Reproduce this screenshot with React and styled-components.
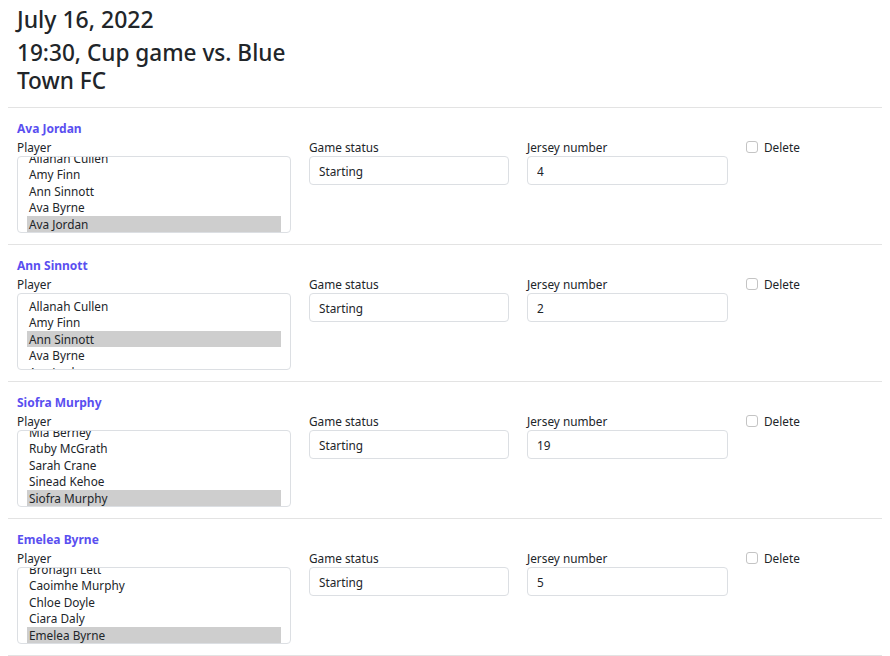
import React from "react";
import styled, { createGlobalStyle } from "styled-components";

const Global = createGlobalStyle`
  html, body { margin: 0; padding: 0; background: #fff; }
  body {
    margin: 0 8px;
    font-family: "Noto Sans", "Open Sans", sans-serif;
    color: #212529;
  }
  * { box-sizing: border-box; }
`;

const Page = styled.div`
  display: flex;
  flex-direction: column;
`;

const Header = styled.header`
  padding: 5px 9px 12px;
  display: flex;
  flex-direction: column;
  gap: 6px;
`;

const DateTitle = styled.h1`
  margin: 0;
  font-size: 23px;
  line-height: 28px;
  font-weight: 500;
`;

const GameTitle = styled.h2`
  margin: 0;
  font-size: 22.6px;
  line-height: 28px;
  font-weight: 500;
  max-width: 290px;
`;

const Section = styled.section`
  border-top: 1px solid #e3e3e3;
  padding: 13px 9px 11px;
  display: flex;
  flex-direction: column;
  gap: 2px;
`;

const LastRule = styled.div`
  border-top: 1px solid #e3e3e3;
  height: 1px;
`;

const Name = styled.div`
  font-size: 12px;
  line-height: 16px;
  font-weight: 700;
  color: #5a4ff0;
`;

const Row = styled.div`
  display: grid;
  grid-template-columns: 274px 200px 201px auto;
  column-gap: 18px;
  align-items: start;
`;

const Field = styled.div`
  display: flex;
  flex-direction: column;
  gap: 1px;
`;

const Label = styled.label`
  font-size: 11.8px;
  line-height: 16px;
  color: #212529;
`;

const ListBox = styled.div`
  height: 77px;
  border: 1px solid #dcdfe3;
  border-radius: 4px;
  padding: ${(p) => (p.$atEnd ? "0 9px 0" : "4px 9px 0")};
  display: flex;
  flex-direction: column;
  justify-content: ${(p) => (p.$atEnd ? "flex-end" : "flex-start")};
  overflow: hidden;
`;

const Option = styled.div`
  flex: 0 0 16.4px;
  height: 16.4px;
  font-size: 11.8px;
  line-height: 17px;
  padding: 0 2px;
  white-space: nowrap;
  overflow: hidden;
  color: #212529;
  background: ${(p) => (p.$selected ? "#cecece" : "transparent")};
`;

const TextInput = styled.input`
  height: 29px;
  width: 100%;
  border: 1px solid #dcdfe3;
  border-radius: 4px;
  padding: 0 9px;
  font-family: inherit;
  font-size: 11.8px;
  color: #212529;
  background: #fff;
  outline: none;
`;

const CheckRow = styled.label`
  display: flex;
  align-items: center;
  gap: 6px;
  font-size: 11.8px;
  line-height: 16px;
`;

const Box = styled.input`
  appearance: none;
  margin: 0;
  width: 12px;
  height: 12px;
  border: 1px solid #c4c4c4;
  border-radius: 3px;
  background: #fff;
`;

const players = [
  {
    name: "Ava Jordan",
    atEnd: true,
    options: ["Aine Walsh", "Allanah Cullen", "Amy Finn", "Ann Sinnott", "Ava Byrne", "Ava Jordan"],
    selected: "Ava Jordan",
    status: "Starting",
    jersey: "4",
  },
  {
    name: "Ann Sinnott",
    atEnd: false,
    options: ["Allanah Cullen", "Amy Finn", "Ann Sinnott", "Ava Byrne", "Ava Jordan", "Bronagh Lett"],
    selected: "Ann Sinnott",
    status: "Starting",
    jersey: "2",
  },
  {
    name: "Siofra Murphy",
    atEnd: true,
    options: ["Leah Doyle", "Mia Berney", "Ruby McGrath", "Sarah Crane", "Sinead Kehoe", "Siofra Murphy"],
    selected: "Siofra Murphy",
    status: "Starting",
    jersey: "19",
  },
  {
    name: "Emelea Byrne",
    atEnd: true,
    options: ["Ava Jordan", "Bronagh Lett", "Caoimhe Murphy", "Chloe Doyle", "Ciara Daly", "Emelea Byrne"],
    selected: "Emelea Byrne",
    status: "Starting",
    jersey: "5",
  },
];

export default function App() {
  return (
    <Page>
      <Global />
      <Header>
        <DateTitle>July 16, 2022</DateTitle>
        <GameTitle>19:30, Cup game vs. Blue Town FC</GameTitle>
      </Header>
      {players.map((p) => (
        <Section key={p.name}>
          <Name>{p.name}</Name>
          <Row>
            <Field>
              <Label>Player</Label>
              <ListBox $atEnd={p.atEnd}>
                {p.options.map((o) => (
                  <Option key={o} $selected={o === p.selected}>
                    {o}
                  </Option>
                ))}
              </ListBox>
            </Field>
            <Field>
              <Label>Game status</Label>
              <TextInput defaultValue={p.status} />
            </Field>
            <Field>
              <Label>Jersey number</Label>
              <TextInput defaultValue={p.jersey} />
            </Field>
            <CheckRow>
              <Box type="checkbox" />
              Delete
            </CheckRow>
          </Row>
        </Section>
      ))}
      <LastRule />
    </Page>
  );
}
